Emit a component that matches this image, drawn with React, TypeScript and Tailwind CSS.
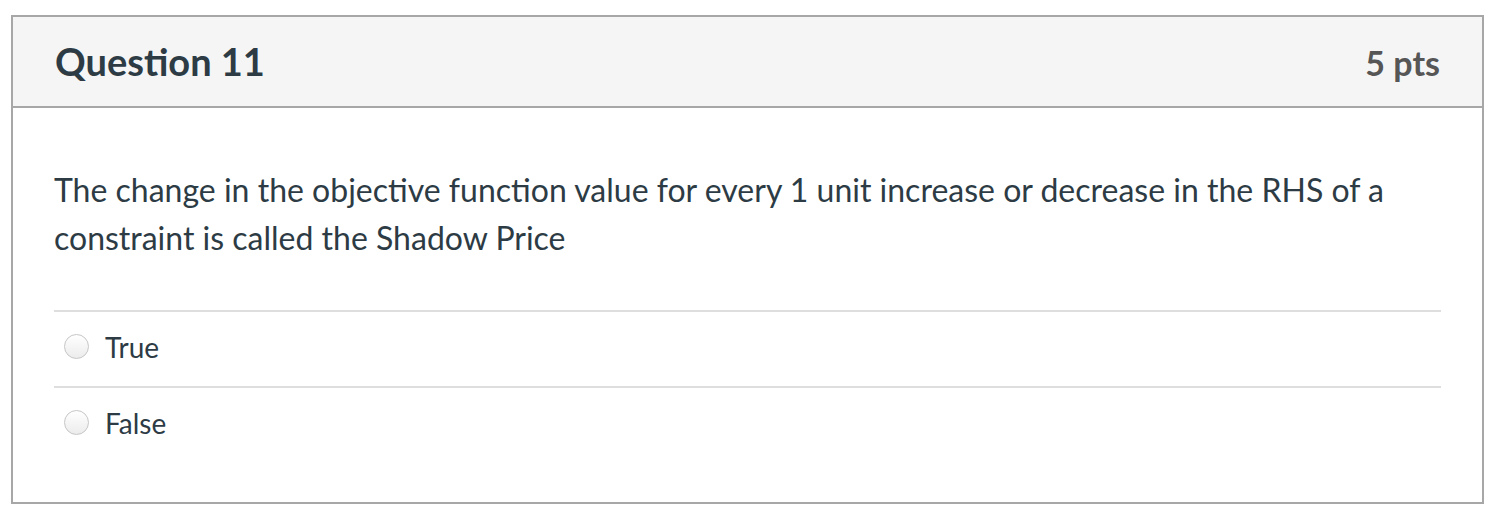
const options = ['True', 'False']

function Radio() {
  return (
    <span className="block size-[25px] shrink-0 rounded-full border border-[#c6c6c6] bg-linear-to-b from-white to-[#ececec]" />
  )
}

export default function App() {
  return (
    <div
      className="min-h-screen bg-white pl-[11px] pt-[15px] text-[#2d3b45]"
      style={{ fontFamily: 'Lato, "Open Sans", sans-serif' }}
    >
      <div className="h-[489px] w-[1473px] border-2 border-[#a7a7a7]">
        {/* Header */}
        <div className="flex h-[91px] items-baseline justify-between border-b-2 border-[#a7a7a7] bg-[#f5f5f5] px-[42px] pt-[25px]">
          <h2 className="text-[38px] font-bold leading-none">Question 11</h2>
          <span className="text-[34px] font-bold leading-none text-[#565656]">5 pts</span>
        </div>

        {/* Body */}
        <div className="px-[41px] pt-[58px]">
          <p className="text-[32px] leading-[48px]">
            The change in the objective function value for every 1 unit increase or decrease in the RHS of a
            constraint is called the Shadow Price
          </p>

          <div className="mt-[48px]">
            {options.map((opt) => (
              <label
                key={opt}
                className="flex h-[76px] items-center gap-[16px] border-t-2 border-[#dedede] pb-[5px] pl-[10px]"
              >
                <Radio />
                <span className="text-[28px]">{opt}</span>
              </label>
            ))}
          </div>
        </div>
      </div>
    </div>
  )
}
